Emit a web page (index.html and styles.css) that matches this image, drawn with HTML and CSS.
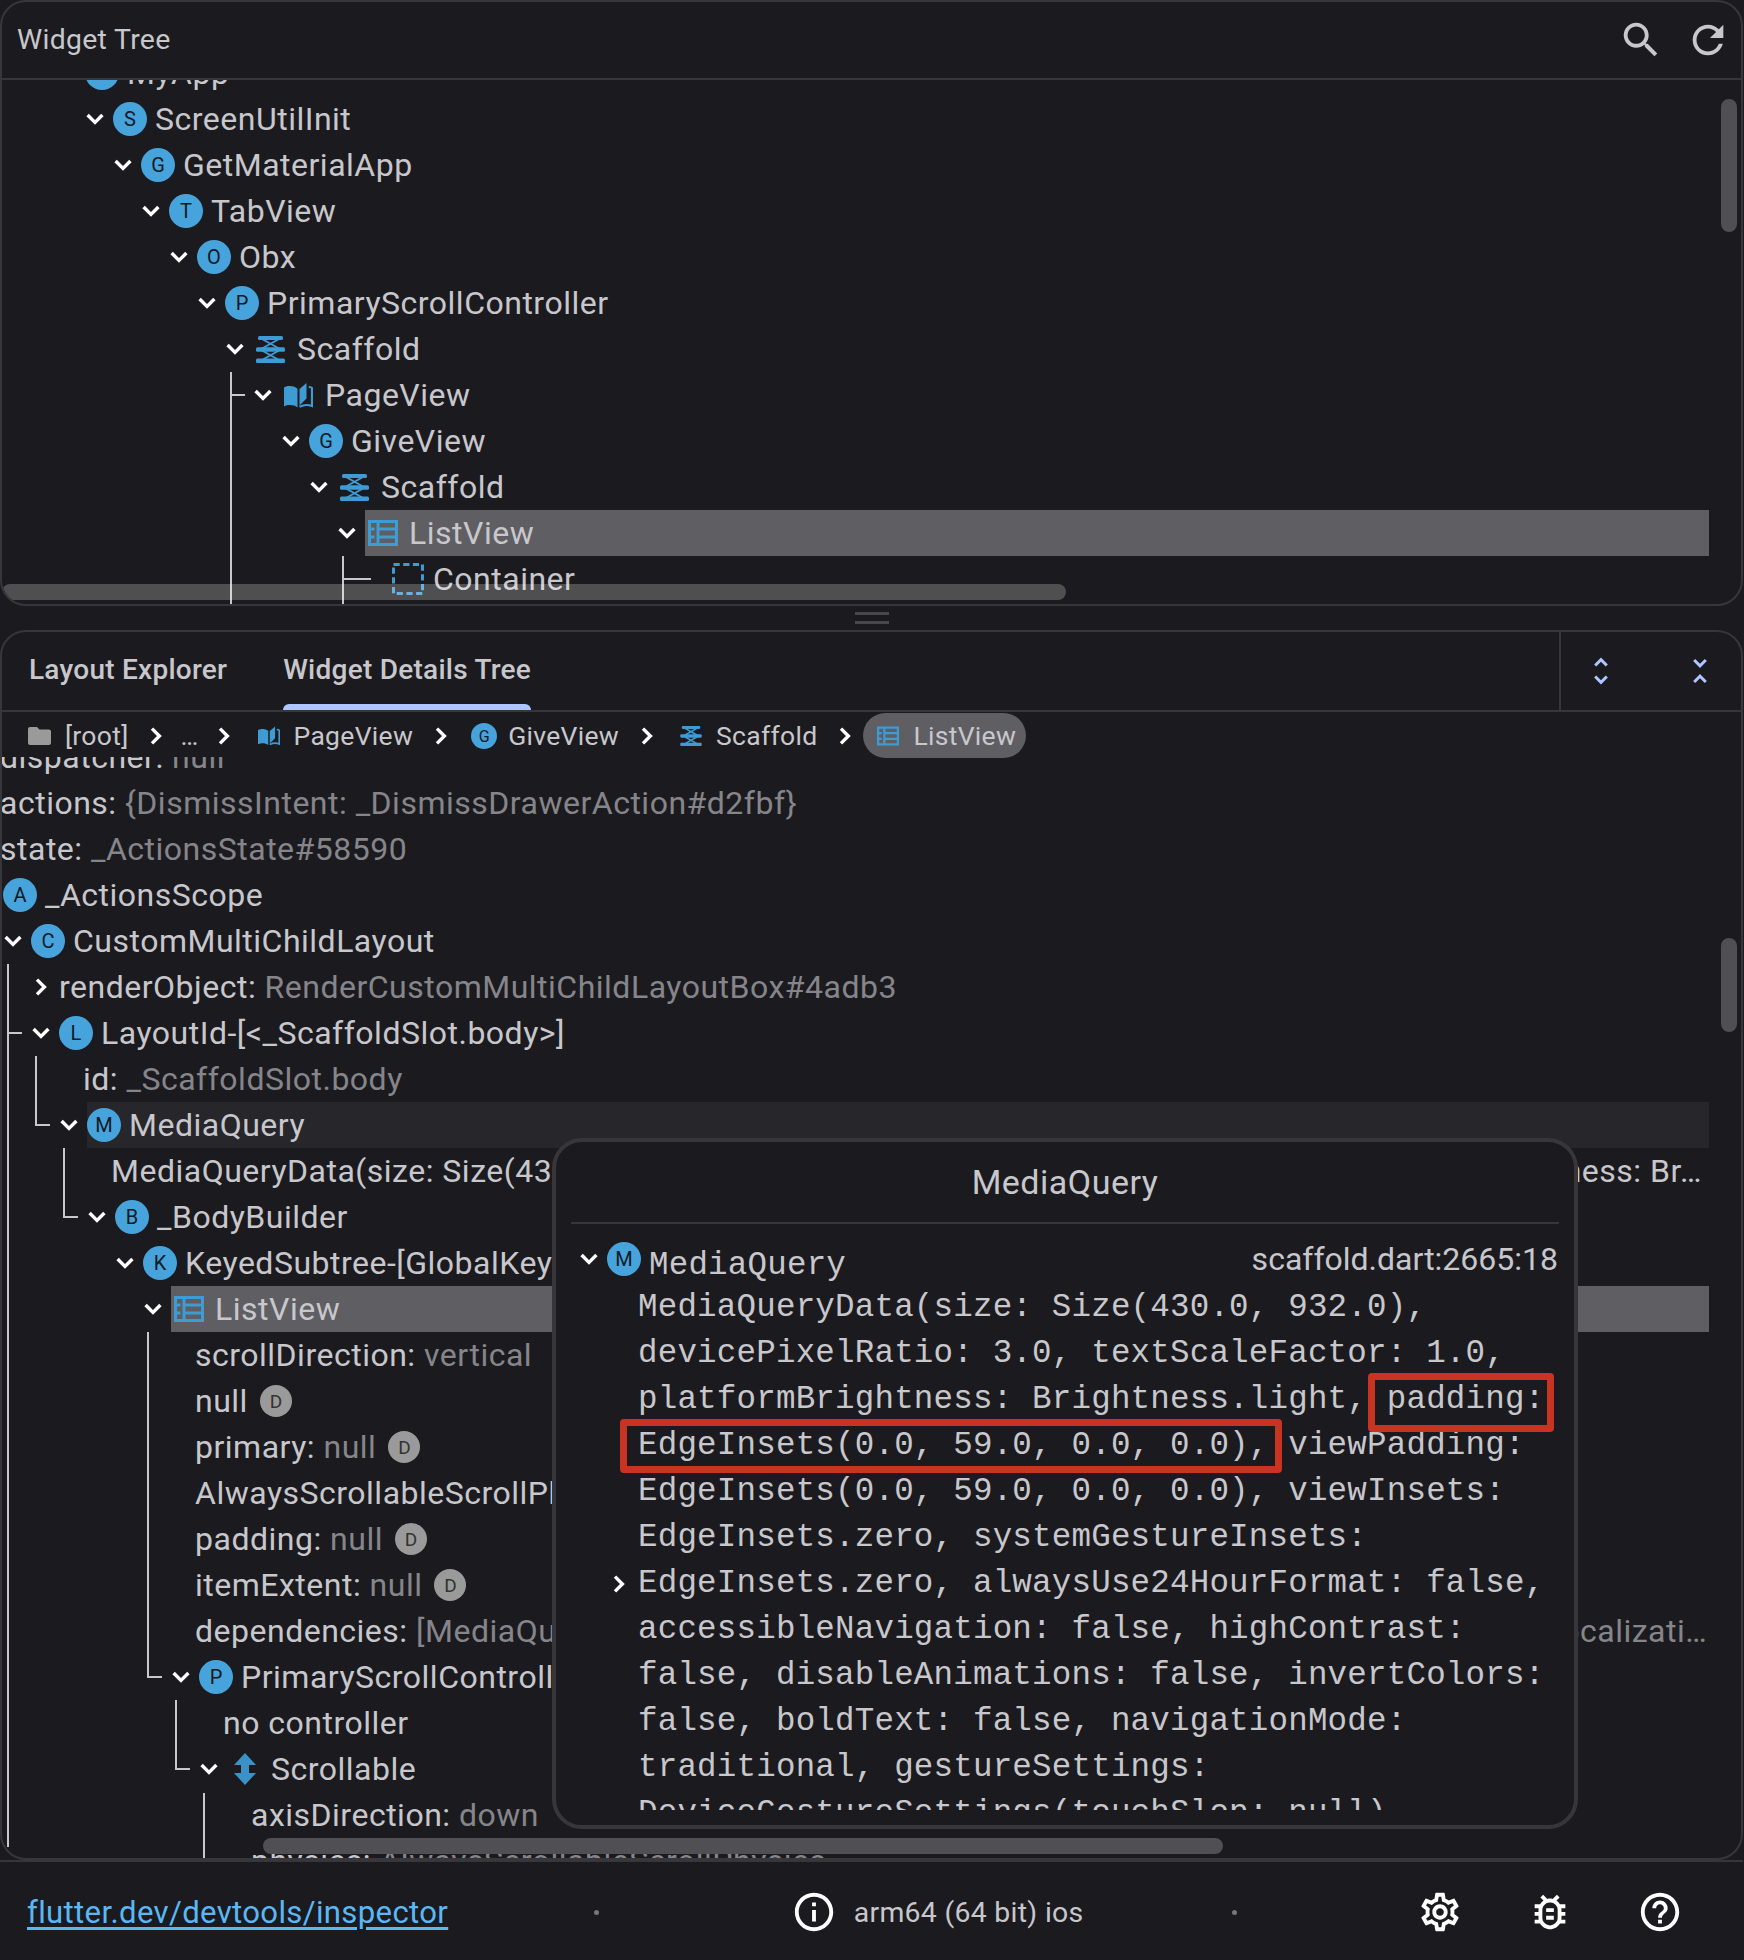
FILE: index.html
```html
<!DOCTYPE html>
<html lang="en">
<head>
<meta charset="utf-8">
<title>Widget Tree</title>
<link rel="stylesheet" href="styles.css">
</head>
<body>
<svg class="defs" width="0" height="0" aria-hidden="true">
  <defs>
    <symbol id="i-down" viewBox="0 0 18 12"><path d="M1.600 2 9 9.400 16.400 2" fill="none" stroke="#fff" stroke-width="3.400"/></symbol>
    <symbol id="i-right" viewBox="0 0 12 18"><path d="M2 1.600 9.400 9 2 16.400" fill="none" stroke="#fff" stroke-width="3.400"/></symbol>
    <symbol id="i-scaffold" viewBox="0 0 29 27"><g fill="#3f9bd3"><rect x="2" y="0" width="25" height="4" rx="1.500"/><rect x="0" y="11.300" width="29" height="4.400" rx="1.500"/><rect x="0" y="22.600" width="29" height="4.400" rx="1.500"/></g><path d="M6 3 23 12.500M23 3 6 12.500M6 14.500 23 24M23 14.500 6 24" stroke="#3f9bd3" stroke-width="2" fill="none"/></symbol>
    <symbol id="i-book" viewBox="0 0 29 25"><g fill="#3f9bd3"><path d="M0 4.500c4-2 9.500-2 13.500 1.200V24.500c-4-3-9.500-3-13.500-1z"/><path d="M15.500 6 22.500 0v15.500l-7 7z"/></g><path d="M24.800 4c1.500 0 3 .4 3.200 1v18c-4-1.500-8-1.500-12.500 .8" fill="none" stroke="#3f9bd3" stroke-width="2.200"/></symbol>
    <symbol id="i-list" viewBox="0 0 30 26"><path d="M1.500 1.500H28.500V24.500H1.500ZM10 1.500V24.500M10 9H28.500M10 17H28.500M1.500 9H6.500M1.500 17H6.500" fill="none" stroke="#3f9bd3" stroke-width="3"/></symbol>
    <symbol id="i-scroll" viewBox="0 0 22 32"><path d="M11 0 22 12H15V20H22L11 32 0 20H7V12H0Z" fill="#3b92c8"/></symbol>
  </defs>
</svg>

<main class="app">
  <section class="panel panel-top">
    <header class="panel-head">
      <span class="panel-title">Widget Tree</span>
      <div class="head-actions">
        <svg class="icon-46" viewBox="0 0 24 24"><path d="M15.500 14h-.79l-.28-.27C15.410 12.590 16 11.110 16 9.500 16 5.910 13.090 3 9.500 3S3 5.910 3 9.500 5.910 16 9.500 16c1.610 0 3.090-.59 4.230-1.570l.27.28v.79l5 4.990L20.490 19l-4.990-5zm-6 0C7.010 14 5 11.990 5 9.500S7.010 5 9.500 5 14 7.010 14 9.500 11.990 14 9.500 14z"/></svg>
        <svg class="icon-46" viewBox="0 0 24 24"><path d="M17.650 6.350C16.200 4.900 14.210 4 12 4c-4.420 0-7.990 3.580-7.990 8s3.570 8 7.990 8c3.730 0 6.840-2.550 7.730-6h-2.080c-.82 2.330-3.040 4-5.650 4-3.310 0-6-2.690-6-6s2.690-6 6-6c1.660 0 3.140.69 4.220 1.780L13 11h7V4l-2.350 2.350z"/></svg>
      </div>
    </header>
    <div class="tree tree-top">
      <div class="rows">
        <div class="row leaf d0"><span class="badge">M</span><span class="label">MyApp</span></div>
        <div class="row d0"><svg class="chev"><use href="#i-down"/></svg><span class="node"><span class="badge">S</span><span class="label">ScreenUtilInit</span></span></div>
        <div class="row d1"><svg class="chev"><use href="#i-down"/></svg><span class="node"><span class="badge">G</span><span class="label">GetMaterialApp</span></span></div>
        <div class="row d2"><svg class="chev"><use href="#i-down"/></svg><span class="node"><span class="badge">T</span><span class="label">TabView</span></span></div>
        <div class="row d3"><svg class="chev"><use href="#i-down"/></svg><span class="node"><span class="badge">O</span><span class="label">Obx</span></span></div>
        <div class="row d4"><svg class="chev"><use href="#i-down"/></svg><span class="node"><span class="badge">P</span><span class="label">PrimaryScrollController</span></span></div>
        <div class="row d5"><svg class="chev"><use href="#i-down"/></svg><span class="node"><svg class="glyph scaffold"><use href="#i-scaffold"/></svg><span class="label">Scaffold</span></span></div>
        <div class="row d6"><svg class="chev"><use href="#i-down"/></svg><span class="node"><svg class="glyph book"><use href="#i-book"/></svg><span class="label">PageView</span></span></div>
        <div class="row d7"><svg class="chev"><use href="#i-down"/></svg><span class="node"><span class="badge">G</span><span class="label">GiveView</span></span></div>
        <div class="row d8"><svg class="chev"><use href="#i-down"/></svg><span class="node"><svg class="glyph scaffold"><use href="#i-scaffold"/></svg><span class="label">Scaffold</span></span></div>
        <div class="row d9"><svg class="chev"><use href="#i-down"/></svg><span class="node selected"><svg class="glyph list"><use href="#i-list"/></svg><span class="label">ListView</span></span></div>
        <div class="row leaf d11"><svg class="glyph dashed" viewBox="0 0 32 32"><rect x="1.500" y="1.500" width="29" height="29" fill="none" stroke="#3f9bd3" stroke-width="3" stroke-dasharray="6.200 3.500"/></svg><span class="label">Container</span></div>
      </div>
      <svg class="links links-top" width="400" height="524"><path d="M229 292V524M229 315H243M341 476V524M341 499H369"/></svg>
    </div>
    <div class="bar vbar vbar-top"></div>
    <div class="bar hbar hbar-top"></div>
  </section>

  <div class="handle"><span></span><span></span></div>

  <section class="panel panel-bottom">
    <div class="tabs">
      <div class="tab-list">
        <span class="tab">Layout Explorer</span>
        <span class="tab active">Widget Details Tree</span>
      </div>
      <div class="tab-actions">
        <svg class="icon-36" viewBox="0 0 24 24"><path d="M12 5.830 15.170 9l1.410-1.410L12 3 7.410 7.590 8.830 9 12 5.830zm0 12.340L8.830 15l-1.410 1.410L12 21l4.590-4.590L15.170 15 12 18.170z"/></svg>
        <svg class="icon-36" viewBox="0 0 24 24"><path d="M7.410 18.590 8.830 20 12 16.830 15.170 20l1.410-1.410L12 14l-4.590 4.590zm9.180-13.180L15.170 4 12 7.170 8.830 4 7.410 5.410 12 10l4.590-4.590z"/></svg>
      </div>
    </div>
    <nav class="crumbs">
      <span class="crumb"><svg class="folder" viewBox="0 0 23 18"><path d="M2 0h7l2.500 2.500H21c1.100 0 2 .9 2 2V16c0 1.100-.9 2-2 2H2c-1.100 0-2-.9-2-2V2C0 .9.900 0 2 0z"/></svg>[root]</span>
      <span class="sep"><svg class="sep-chev"><use href="#i-right"/></svg></span>
      <span class="crumb dots">…</span>
      <span class="sep"><svg class="sep-chev"><use href="#i-right"/></svg></span>
      <span class="crumb pad"><svg class="crumb-glyph"><use href="#i-book"/></svg>PageView</span>
      <span class="sep"><svg class="sep-chev"><use href="#i-right"/></svg></span>
      <span class="crumb circle"><span class="badge small">G</span>GiveView</span>
      <span class="sep"><svg class="sep-chev"><use href="#i-right"/></svg></span>
      <span class="crumb pad"><svg class="crumb-glyph"><use href="#i-scaffold"/></svg>Scaffold</span>
      <span class="sep"><svg class="sep-chev"><use href="#i-right"/></svg></span>
      <span class="crumb chip"><svg class="crumb-glyph"><use href="#i-list"/></svg>ListView</span>
    </nav>
    <div class="tree tree-bottom">
      <div class="rows">
        <div class="row leaf d0"><span class="label">dispatcher: <span class="val">null</span></span></div>
        <div class="row leaf d0"><span class="label">actions: <span class="val">{DismissIntent: _DismissDrawerAction#d2fbf}</span></span></div>
        <div class="row leaf d0"><span class="label">state: <span class="val">_ActionsState#58590</span></span></div>
        <div class="row leaf d0 inset"><span class="badge">A</span><span class="label">_ActionsScope</span></div>
        <div class="row d0"><svg class="chev"><use href="#i-down"/></svg><span class="node"><span class="badge">C</span><span class="label">CustomMultiChildLayout</span></span></div>
        <div class="row d1"><svg class="chev right"><use href="#i-right"/></svg><span class="label">renderObject: <span class="val">RenderCustomMultiChildLayoutBox#4adb3</span></span></div>
        <div class="row d1"><svg class="chev"><use href="#i-down"/></svg><span class="node"><span class="badge">L</span><span class="label">LayoutId-[&lt;_ScaffoldSlot.body&gt;]</span></span></div>
        <div class="row leaf d3"><span class="label">id: <span class="val">_ScaffoldSlot.body</span></span></div>
        <div class="row d2"><svg class="chev"><use href="#i-down"/></svg><span class="node hovered"><span class="badge">M</span><span class="label">MediaQuery</span></span></div>
        <div class="row leaf d4"><span class="label">MediaQueryData(size: Size(430.0, 932.0), devicePixelRatio: 3.0, textScaleFactor: 1.0, platformBrightness: Br…</span></div>
        <div class="row d3"><svg class="chev"><use href="#i-down"/></svg><span class="node"><span class="badge">B</span><span class="label">_BodyBuilder</span></span></div>
        <div class="row d4"><svg class="chev"><use href="#i-down"/></svg><span class="node"><span class="badge">K</span><span class="label">KeyedSubtree-[GlobalKey#7a1c3]</span></span></div>
        <div class="row d5"><svg class="chev"><use href="#i-down"/></svg><span class="node selected"><svg class="glyph list"><use href="#i-list"/></svg><span class="label">ListView</span></span></div>
        <div class="row leaf d7"><span class="label">scrollDirection: <span class="val">vertical</span></span></div>
        <div class="row leaf d7"><span class="label">null</span><span class="dbadge">D</span></div>
        <div class="row leaf d7"><span class="label">primary: <span class="val">null</span></span><span class="dbadge">D</span></div>
        <div class="row leaf d7"><span class="label">AlwaysScrollableScrollPhysics</span></div>
        <div class="row leaf d7"><span class="label">padding: <span class="val">null</span></span><span class="dbadge">D</span></div>
        <div class="row leaf d7"><span class="label">itemExtent: <span class="val">null</span></span><span class="dbadge">D</span></div>
        <div class="row leaf d7"><span class="label">dependencies: <span class="val">[MediaQuery, _InheritedTheme, _ScrollConfiguration, _FocusInheritedScope, _Localizati…</span></span></div>
        <div class="row d6"><svg class="chev"><use href="#i-down"/></svg><span class="node"><span class="badge">P</span><span class="label">PrimaryScrollController</span></span></div>
        <div class="row leaf d8"><span class="label">no controller</span></div>
        <div class="row d7"><svg class="chev"><use href="#i-down"/></svg><span class="node"><svg class="glyph arrow"><use href="#i-scroll"/></svg><span class="label">Scrollable</span></span></div>
        <div class="row leaf d9"><span class="label">axisDirection: <span class="val">down</span></span></div>
        <div class="row leaf d9"><span class="label">physics: <span class="val">AlwaysScrollableScrollPhysics</span></span></div>
      </div>
      <svg class="links links-bottom" width="300" height="1101"><path d="M6 207V1090M6 276H20M34 299V368H48M62 391V460H76M146 575V920H160M174 943V1012H188M202 1036V1101"/></svg>
    </div>
    <div class="bar vbar vbar-bottom"></div>
    <div class="bar hbar hbar-bottom"></div>

    <aside class="popup">
      <h2 class="popup-title">MediaQuery</h2>
      <div class="popup-body">
        <div class="popup-head">
          <svg class="chev"><use href="#i-down"/></svg>
          <span class="badge">M</span>
          <span class="mono popup-name">MediaQuery</span>
          <span class="popup-loc">scaffold.dart:2665:18</span>
        </div>
        <div class="mono line">MediaQueryData(size: Size(430.0, 932.0),</div>
        <div class="mono line">devicePixelRatio: 3.0, textScaleFactor: 1.0,</div>
        <div class="mono line">platformBrightness: Brightness.light, padding:</div>
        <div class="mono line">EdgeInsets(0.0, 59.0, 0.0, 0.0), viewPadding:</div>
        <div class="mono line">EdgeInsets(0.0, 59.0, 0.0, 0.0), viewInsets:</div>
        <div class="mono line">EdgeInsets.zero, systemGestureInsets:</div>
        <div class="mono line has-chev"><svg class="line-chev"><use href="#i-right"/></svg>EdgeInsets.zero, alwaysUse24HourFormat: false,</div>
        <div class="mono line">accessibleNavigation: false, highContrast:</div>
        <div class="mono line">false, disableAnimations: false, invertColors:</div>
        <div class="mono line">false, boldText: false, navigationMode:</div>
        <div class="mono line">traditional, gestureSettings:</div>
        <div class="mono line">DeviceGestureSettings(touchSlop: null),</div>
      </div>
      <div class="mark mark-a"></div>
      <div class="mark mark-b"></div>
    </aside>
  </section>

  <footer class="footer">
    <a class="link" href="#">flutter.dev/devtools/inspector</a>
    <span class="dot dot-a"></span>
    <div class="status">
      <svg class="icon-46 white" viewBox="0 0 24 24"><path d="M11 7h2v2h-2zm0 4h2v6h-2zm1-9C6.480 2 2 6.480 2 12s4.480 10 10 10 10-4.480 10-10S17.520 2 12 2zm0 18c-4.410 0-8-3.590-8-8s3.590-8 8-8 8 3.590 8 8-3.590 8-8 8z"/></svg>
      <span>arm64 (64 bit) ios</span>
    </div>
    <span class="dot dot-b"></span>
    <div class="foot-actions">
      <svg class="icon-46 white" viewBox="0 0 24 24"><path d="M19.430 12.980c.04-.32.07-.64.07-.98 0-.34-.03-.66-.07-.98l2.110-1.650c.19-.15.24-.42.12-.64l-2-3.460c-.09-.16-.26-.25-.44-.25-.06 0-.12.01-.17.03l-2.490 1c-.52-.4-1.080-.73-1.690-.98l-.38-2.650C14.460 2.180 14.250 2 14 2h-4c-.25 0-.46.18-.49.42l-.38 2.650c-.61.25-1.170.59-1.690.98l-2.490-1c-.06-.02-.12-.03-.18-.03-.17 0-.34.09-.43.25l-2 3.460c-.13.22-.07.49.12.64l2.110 1.650c-.04.32-.07.65-.07.98 0 .33.03.66.07.98l-2.110 1.650c-.19.15-.24.42-.12.64l2 3.460c.09.16.26.25.44.25.06 0 .12-.01.17-.03l2.490-1c.52.4 1.080.73 1.690.98l.38 2.650c.03.24.24.42.49.42h4c.25 0 .46-.18.49-.42l.38-2.650c.61-.25 1.170-.59 1.690-.98l2.490 1c.06.02.12.03.18.03.17 0 .34-.09.43-.25l2-3.460c.12-.22.07-.49-.12-.64l-2.110-1.650zm-1.980-1.710c.04.31.05.52.05.73 0 .21-.02.43-.05.73l-.14 1.130.89.7 1.080.84-.7 1.210-1.270-.51-1.040-.42-.9.68c-.43.32-.84.56-1.250.73l-1.060.43-.16 1.130-.2 1.350h-1.400l-.19-1.350-.16-1.130-1.060-.43c-.43-.18-.83-.41-1.230-.71l-.91-.7-1.060.43-1.270.51-.7-1.210 1.080-.84.89-.7-.14-1.130c-.03-.31-.05-.54-.05-.74s.02-.43.05-.73l.14-1.130-.89-.7-1.080-.84.7-1.210 1.270.51 1.040.42.9-.68c.43-.32.84-.56 1.250-.73l1.060-.43.16-1.130.2-1.350h1.390l.19 1.350.16 1.130 1.060.43c.43.18.83.41 1.230.71l.91.7 1.060-.43 1.270-.51.7 1.210-1.070.85-.89.7.14 1.130zM12 8c-2.210 0-4 1.790-4 4s1.790 4 4 4 4-1.790 4-4-1.790-4-4-4zm0 6c-1.100 0-2-.9-2-2s.9-2 2-2 2 .9 2 2-.9 2-2 2z"/></svg>
      <svg class="icon-46 white" viewBox="0 0 24 24"><path d="M20 8h-2.810c-.45-.78-1.070-1.450-1.820-1.960L17 4.410 15.590 3l-2.170 2.170C12.960 5.060 12.490 5 12 5s-.96.06-1.410.17L8.410 3 7 4.410l1.620 1.630C7.880 6.550 7.260 7.220 6.810 8H4v2h2.090c-.05.33-.09.66-.09 1v1H4v2h2v1c0 .34.04.67.09 1H4v2h2.810c1.040 1.790 2.970 3 5.190 3s4.150-1.210 5.190-3H20v-2h-2.090c.05-.33.09-.66.09-1v-1h2v-2h-2v-1c0-.34-.04-.67-.09-1H20V8zm-4 4v3c0 .22-.03.47-.07.7l-.1.65-.37.65c-.72 1.240-2.040 2-3.460 2s-2.740-.77-3.460-2l-.37-.64-.1-.65C8.030 15.470 8 15.220 8 15v-4c0-.23.03-.48.07-.7l.1-.65.37-.65c.3-.52.72-.97 1.210-1.310l.57-.39.74-.18c.31-.08.63-.12.94-.12.32 0 .63.04.95.12l.68.16.61.42c.5.34.91.78 1.210 1.310l.38.65.1.65c.04.22.07.47.07.69v1zm-6 2h4v2h-4zm0-4h4v2h-4z"/></svg>
      <svg class="icon-46 white" viewBox="0 0 24 24"><path d="M11 18h2v-2h-2v2zm1-16C6.480 2 2 6.480 2 12s4.480 10 10 10 10-4.480 10-10S17.520 2 12 2zm0 18c-4.410 0-8-3.590-8-8s3.590-8 8-8 8 3.590 8 8-3.590 8-8 8zm0-14c-2.210 0-4 1.790-4 4h2c0-1.100.9-2 2-2s2 .9 2 2c0 2-3 1.750-3 5h2c0-2.250 3-2.500 3-5 0-2.210-1.790-4-4-4z"/></svg>
    </div>
  </footer>
</main>
</body>
</html>
```

FILE: styles.css
```css
* { box-sizing: border-box; }
html, body { margin: 0; padding: 0; }
body {
  width: 1744px;
  height: 1960px;
  overflow: hidden;
  background: #1b1b1f;
  color: #c8c7cc;
  font-family: Roboto, "Liberation Sans", sans-serif;
  font-size: 32px;
  letter-spacing: .5px;
}
.defs { position: absolute; }
.app { display: flex; flex-direction: column; height: 1960px; padding-right: 1px; }

.panel {
  position: relative;
  border: 2px solid #37373b;
  border-radius: 26px;
  overflow: hidden;
  background: #1b1b1f;
}
.panel-top { height: 606px; display: flex; flex-direction: column; }
.panel-bottom { height: 1230px; display: flex; flex-direction: column; }

.panel-head {
  height: 78px;
  flex: none;
  border-bottom: 2px solid #37373b;
  display: flex;
  align-items: center;
  justify-content: space-between;
  padding: 0 10px 0 15px;
}
.panel-title { font-size: 28.400px; letter-spacing: .3px; padding-bottom: 2px; }
.head-actions { display: flex; gap: 21px; margin-top: -1px; }
.icon-46 { width: 46px; height: 46px; fill: #c8c7cc; flex: none; }
.icon-46.white { fill: #fff; }
.icon-36 { width: 36px; height: 36px; fill: #adc6ff; flex: none; }

.handle {
  height: 24px;
  flex: none;
  display: flex;
  flex-direction: column;
  align-items: center;
  justify-content: center;
  gap: 6px;
}
.handle span { width: 34px; height: 3px; background: #48484c; }

.tree { position: relative; flex: 1; min-height: 0; overflow: hidden; padding-right: 32px; }
.rows { position: relative; }
.tree-top { --base: 80px; }
.tree-top .rows { margin-top: -30px; }
.tree-bottom { --base: -2px; }
.tree-bottom .rows { margin-top: -23px; }

.row {
  --d: 0;
  height: 46px;
  display: flex;
  align-items: center;
  white-space: nowrap;
  padding-left: calc(var(--base) + 28px * var(--d));
}
.d1 { --d: 1; } .d2 { --d: 2; } .d3 { --d: 3; } .d4 { --d: 4; } .d5 { --d: 5; }
.d6 { --d: 6; } .d7 { --d: 7; } .d8 { --d: 8; } .d9 { --d: 9; } .d11 { --d: 11; }
.row.leaf { overflow: hidden; }
.tree-bottom .row.leaf { margin-left: -1px; }
.tree-bottom .row.d0 { margin-left: -2px; }
.tree-top .row.leaf .badge { margin-left: 3px; }
.tree-top .row.leaf .glyph { margin-left: 2px; }
.row.inset .badge { margin-left: 3px; }
.label { line-height: 46px; }
.val { color: #86858a; }

.chev { width: 18px; height: 12px; margin: 0 9px 0 4px; flex: none; }
.chev.right { width: 12px; height: 18px; margin: 0 12px 0 7px; }
.node { flex: 1; display: flex; align-items: center; height: 46px; min-width: 0; }
.node.selected { background: #5f5e63; }
.node.hovered { background: #26262b; }

.badge {
  width: 34px;
  height: 34px;
  border-radius: 50%;
  background: #47a3dc;
  color: #0e1a25;
  font-size: 20px;
  font-weight: 400;
  letter-spacing: 0;
  line-height: 35px;
  text-align: center;
  flex: none;
  margin-right: 8px;
}
.badge.small { width: 26px; height: 26px; line-height: 27px; font-size: 16px; margin-right: 11px; }
.glyph { flex: none; }
.glyph.scaffold { width: 29px; height: 27px; margin: 0 12px 0 3px; }
.glyph.book { width: 29px; height: 25px; margin: 0 12px 0 3px; }
.glyph.list { width: 30px; height: 26px; margin: 0 11px 0 3px; }
.glyph.dashed { width: 32px; height: 32px; margin-right: 9px; }
.glyph.arrow { width: 22px; height: 32px; margin: 0 15px 0 7px; }

.dbadge {
  width: 32px;
  height: 32px;
  border-radius: 50%;
  background: #9a9a9a;
  color: #333;
  font-size: 19px;
  line-height: 33px;
  text-align: center;
  letter-spacing: 0;
  margin-left: 12px;
  flex: none;
}

.links { position: absolute; left: 0; top: 0; pointer-events: none; }
.links path { fill: none; stroke: #c8c7cc; stroke-width: 2; }

.bar { position: absolute; border-radius: 8px; }
.vbar { width: 16px; background: #4f4f54; }
.hbar { height: 16px; }
.vbar-top { right: 4px; top: 97px; height: 133px; }
.hbar-top { left: 0; top: 582px; width: 1064px; background: rgba(255, 255, 255, .23); }
.vbar-bottom { right: 4px; top: 306px; height: 94px; }
.hbar-bottom { left: 261px; top: 1206px; width: 960px; background: #4f4f54; }

.tabs { height: 80px; flex: none; border-bottom: 2px solid #37373b; display: flex; justify-content: space-between; }
.tab-list { display: flex; gap: 56px; padding-left: 27px; }
.tab { height: 78px; line-height: 76px; font-size: 28px; font-weight: 500; letter-spacing: .25px; position: relative; }
.tab.active::after {
  content: "";
  position: absolute;
  left: 0;
  right: 0;
  bottom: 0;
  height: 6px;
  background: #adc6ff;
  border-radius: 6px 6px 0 0;
}
.tab-actions {
  width: 182px;
  border-left: 2px solid #37373b;
  display: flex;
  align-items: center;
  gap: 63px;
  padding-left: 22px;
}

.crumbs {
  position: relative;
  z-index: 1;
  height: 45px;
  flex: none;
  display: flex;
  align-items: center;
  padding: 2px 0 0 26px;
  font-size: 26.500px;
  letter-spacing: .3px;
  white-space: nowrap;
}
.crumb { display: flex; align-items: center; }
.crumb.dots { margin: 0 -2px 0 -3px; }
.crumb.pad { padding-left: 6px; }
.crumb.circle { padding-left: 3px; }
.folder { width: 23px; height: 18px; fill: #9a9a9a; margin-right: 14px; }
.crumb-glyph { width: 22px; height: 20px; margin-right: 14px; flex: none; }
.sep { width: 55px; display: flex; justify-content: center; flex: none; }
.sep-chev { width: 12px; height: 18px; }
.chip {
  height: 45px;
  margin-left: -9px;
  padding: 0 10px 0 14px;
  background: #5f5e63;
  border-radius: 23px;
}

.popup {
  position: absolute;
  left: 550px;
  top: 506px;
  width: 1026px;
  height: 691px;
  background: #1b1b1f;
  border: 4px solid #37373b;
  border-radius: 30px;
  z-index: 2;
  display: flex;
  flex-direction: column;
}
.popup-title {
  margin: 0 15px;
  height: 82px;
  flex: none;
  border-bottom: 2px solid #37373b;
  font-size: 34px;
  font-weight: 400;
  letter-spacing: .5px;
  line-height: 80px;
  text-align: center;
}
.popup-body { margin: 15px 0 0; height: 571px; overflow: hidden; padding: 0 16px 0 15px; }
.popup-head { height: 46px; display: flex; align-items: center; padding-left: 5px; }
.popup-head .badge { margin: 0 8px 6px 0; }
.popup-head .chev { margin: 0 9px 6px 4px; }
.popup-name { padding-top: 6px; }
.popup-loc { margin: 0 0 6px auto; color: #c8c7cc; font-size: 32px; letter-spacing: 0; }
.mono { font-family: "Liberation Mono", "DejaVu Sans Mono", monospace; font-size: 32.500px; letter-spacing: .2px; }
.line { height: 46px; line-height: 46px; padding-left: 67px; white-space: nowrap; }
.line.has-chev { display: flex; align-items: center; padding-left: 42px; }
.line-chev { width: 12px; height: 18px; margin-right: 13px; flex: none; }

.mark { position: absolute; border: 7px solid #c93321; border-radius: 4px; }
.mark-a { left: 812px; top: 231px; width: 186px; height: 59px; }
.mark-b { left: 64px; top: 277px; width: 662px; height: 54px; }

.footer {
  height: 100px;
  flex: none;
  border-top: 2px solid #37373b;
  display: flex;
  align-items: center;
  padding: 2px 0 0 27px;
}
.link { color: #5ab8f5; text-decoration: underline; text-underline-offset: 4px; letter-spacing: .35px; font-size: 31.100px; }
.dot { width: 5px; height: 5px; border-radius: 50%; background: #77767b; flex: none; }
.dot-a { margin-left: 146px; }
.status { display: flex; align-items: center; gap: 17px; margin-left: 191.500px; font-size: 28.400px; letter-spacing: .3px; }
.dot-b { margin-left: 148px; }
.foot-actions { display: flex; gap: 64px; margin-left: 180px; }
```
